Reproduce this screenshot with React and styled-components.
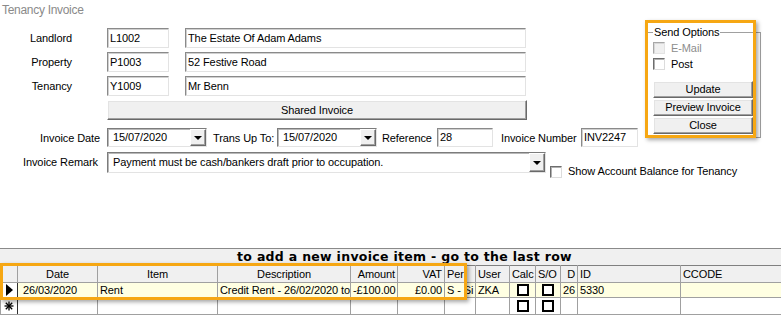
import styled, { createGlobalStyle } from 'styled-components'

const GlobalStyle = createGlobalStyle`
  html, body {
    margin: 0;
    padding: 0;
    background: #ffffff;
  }
  body {
    font-family: "Liberation Sans", Arial, sans-serif;
    font-size: 11px;
    letter-spacing: -0.1px;
    color: #000000;
  }
`

const ORANGE = '#f6a713'

const Page = styled.div`
  position: relative;
  width: 781px;
  height: 316px;
  overflow: hidden;
  background: #ffffff;
`

const TopSection = styled.div`
  display: flex;
  align-items: flex-start;
`

const FormColumn = styled.div`
  width: 647px;
  flex-shrink: 0;
`

const Title = styled.div`
  margin: 3px 0 0 2px;
  height: 14px;
  line-height: 14px;
  font-size: 12px;
  letter-spacing: -0.3px;
  color: #8a8a8a;
`

const FieldRow = styled.div`
  display: flex;
  align-items: ${props => props.align || 'center'};
  height: ${props => props.h || 20}px;
  margin-top: ${props => props.mt ?? 4}px;
`

const Label = styled.div`
  width: ${props => props.w}px;
  margin-left: ${props => props.ml || 0}px;
  text-align: ${props => props.right ? 'right' : 'left'};
  flex-shrink: 0;
  white-space: nowrap;
`

const TextBox = styled.div`
  box-sizing: border-box;
  width: ${props => props.w}px;
  height: ${props => props.h || 20}px;
  margin-left: ${props => props.ml || 0}px;
  padding: 0 2px;
  line-height: ${props => (props.h || 20) - 2}px;
  border: 1px solid;
  border-color: #8a8a8a #e3e3e3 #e3e3e3 #8a8a8a;
  box-shadow: inset 1px 1px 0 #d0d0d0;
  background: #ffffff;
  white-space: nowrap;
  overflow: hidden;
  flex-shrink: 0;
`

const Combo = styled.div`
  box-sizing: border-box;
  display: flex;
  align-items: stretch;
  width: ${props => props.w}px;
  height: ${props => props.h || 19}px;
  margin-left: ${props => props.ml || 0}px;
  border: 1px solid;
  border-color: #7c7c7c #e3e3e3 #e3e3e3 #7c7c7c;
  box-shadow: inset 1px 1px 0 #b8b8b8;
  background: #ffffff;
  flex-shrink: 0;
`

const ComboText = styled.div`
  flex: 1;
  padding-left: 5px;
  line-height: ${props => (props.h || 19) - 2}px;
  white-space: nowrap;
  overflow: hidden;
`

const DropButton = styled.div`
  box-sizing: border-box;
  width: 16px;
  display: flex;
  align-items: center;
  justify-content: center;
  background: #f0f0f0;
  border: 1px solid;
  border-color: #ffffff #696969 #696969 #ffffff;
  box-shadow: inset -1px -1px 0 #a0a0a0;

  &::after {
    content: '';
    border-left: 4px solid transparent;
    border-right: 4px solid transparent;
    border-top: 4px solid #000000;
    margin-top: 1px;
  }
`

const Button = styled.div`
  box-sizing: border-box;
  width: ${props => props.w}px;
  height: ${props => props.h || 17}px;
  margin-left: ${props => props.ml || 0}px;
  margin-top: ${props => props.mt || 0}px;
  line-height: ${props => (props.h || 17) - 2}px;
  text-align: center;
  background: #f0f0f0;
  border: 1px solid;
  border-color: #ffffff #696969 #696969 #ffffff;
  box-shadow: inset -1px -1px 0 #a0a0a0, inset 1px 1px 0 #e3e3e3;
  white-space: nowrap;
`

const CheckBox = styled.div`
  box-sizing: border-box;
  width: 12px;
  height: 12px;
  margin-left: ${props => props.ml || 0}px;
  margin-top: ${props => props.mt || 0}px;
  border: 1px solid;
  border-color: ${props => props.disabled ? '#a8a8a8 #e3e3e3 #e3e3e3 #a8a8a8' : '#6d6d6d #dcdcdc #dcdcdc #6d6d6d'};
  box-shadow: inset 1px 1px 0 ${props => props.disabled ? '#d8d8d8' : '#b0b0b0'};
  background: ${props => props.disabled ? '#f0f0f0' : '#ffffff'};
  flex-shrink: 0;
`

const GroupBox = styled.div`
  box-sizing: border-box;
  width: 114px;
  margin-top: 32px;
  padding: 0 6px 3px 5px;
  border: 1px solid #a0a0a0;
  box-shadow: inset 1px 1px 0 #ffffff;
`

const Legend = styled.div`
  width: fit-content;
  margin-top: -7px;
  padding: 0 1px;
  line-height: 13px;
  background: #ffffff;
`

const CheckRow = styled.div`
  display: flex;
  align-items: center;
  gap: 6px;
  height: 12px;
  margin-top: ${props => props.mt}px;
  color: ${props => props.disabled ? '#8d8d8d' : '#000000'};
`

const RemarkText = styled.div`
  margin-left: 6px;
  margin-top: 13px;
  white-space: nowrap;
`

const GridWrap = styled.div`
  margin-top: 71px;
  border-top: 1px solid #8a8a8a;
`

const GridBar = styled.div`
  height: 16px;
  padding-left: 28px;
  line-height: 16px;
  text-align: center;
  background: #f0f0f0;
  font-family: "DejaVu Sans", Verdana, sans-serif;
  font-weight: bold;
  font-size: 12.5px;
  letter-spacing: 0.3px;
  white-space: nowrap;
`

const Table = styled.table`
  border-collapse: collapse;
  table-layout: fixed;
  width: 782px;
`

const HeadCell = styled.th`
  height: 16px;
  padding: 0 2px;
  border: 1px solid #a0a0a0;
  border-top-color: #808080;
  background: #f0f0f0;
  font-weight: normal;
  text-align: ${props => props.align || 'left'};
  white-space: nowrap;
  overflow: hidden;
`

const Cell = styled.td`
  height: ${props => props.h || 14}px;
  padding: 0 2px;
  border: 1px solid #a0a0a0;
  background: ${props => props.bg || '#ffffff'};
  text-align: ${props => props.align || 'left'};
  white-space: nowrap;
  overflow: hidden;
  line-height: 13px;
`

const SelectorCell = styled.td`
  height: ${props => props.h || 14}px;
  padding: 0;
  border: 1px solid #a0a0a0;
  border-right: 1px solid #303030;
  text-align: center;
  vertical-align: middle;
`

const Pointer = styled.div`
  width: 0;
  height: 0;
  margin-left: 5px;
  border-top: 6px solid transparent;
  border-bottom: 6px solid transparent;
  border-left: 7px solid #000000;
`

const GridCheck = styled.div`
  box-sizing: border-box;
  width: 12px;
  height: 12px;
  margin: 0 auto;
  border: 2px solid #000000;
  background: #ffffff;
`

const Highlight = styled.div`
  position: absolute;
  left: ${props => props.x}px;
  top: ${props => props.y}px;
  width: ${props => props.w}px;
  height: ${props => props.h}px;
  box-sizing: border-box;
  border: 3px solid ${ORANGE};
  box-shadow: 2px 2px 4px rgba(0, 0, 0, 0.35);
  pointer-events: none;
`

const columns = [
  { key: 'sel', w: 17 },
  { key: 'date', w: 80, label: 'Date', align: 'center' },
  { key: 'item', w: 120, label: 'Item', align: 'center' },
  { key: 'desc', w: 133, label: 'Description', align: 'center' },
  { key: 'amount', w: 47, label: 'Amount', align: 'right' },
  { key: 'vat', w: 47, label: 'VAT', align: 'right' },
  { key: 'per', w: 31, label: 'Per' },
  { key: 'user', w: 34, label: 'User' },
  { key: 'calc', w: 26, label: 'Calc' },
  { key: 'so', w: 25, label: 'S/O' },
  { key: 'd', w: 17, label: 'D', align: 'right' },
  { key: 'id', w: 103, label: 'ID' },
  { key: 'ccode', w: 102, label: 'CCODE' },
]

const Asterisk = () => (
  <svg width="10" height="10" viewBox="0 0 10 10" style={{ display: 'block', margin: '0 auto' }}>
    <g stroke="#000" strokeWidth="1.3">
      <line x1="5" y1="0.5" x2="5" y2="9.5" />
      <line x1="0.5" y1="5" x2="9.5" y2="5" />
      <line x1="1.8" y1="1.8" x2="8.2" y2="8.2" />
      <line x1="8.2" y1="1.8" x2="1.8" y2="8.2" />
    </g>
  </svg>
)

function InvoiceGrid() {
  const rowBg = '#ffffe2'
  return (
    <GridWrap>
      <GridBar>to add a new invoice item - go to the last row</GridBar>
      <Table>
        <colgroup>
          {columns.map(c => <col key={c.key} style={{ width: c.w }} />)}
        </colgroup>
        <thead>
          <tr>
            {columns.map(c => (
              <HeadCell key={c.key} align={c.align}>{c.label || ''}</HeadCell>
            ))}
          </tr>
        </thead>
        <tbody>
          <tr>
            <SelectorCell><Pointer /></SelectorCell>
            <Cell bg={rowBg} style={{ paddingLeft: 5 }}>26/03/2020</Cell>
            <Cell bg={rowBg}>Rent</Cell>
            <Cell bg={rowBg}>Credit Rent - 26/02/2020 to</Cell>
            <Cell bg={rowBg} align="right">-£100.00</Cell>
            <Cell bg={rowBg} align="right">£0.00</Cell>
            <Cell bg={rowBg}>S - Si</Cell>
            <Cell bg={rowBg}>ZKA</Cell>
            <Cell bg={rowBg}><GridCheck /></Cell>
            <Cell bg={rowBg}><GridCheck /></Cell>
            <Cell bg={rowBg} align="right">26</Cell>
            <Cell bg={rowBg}>5330</Cell>
            <Cell bg={rowBg}></Cell>
          </tr>
          <tr>
            <SelectorCell h={16}><Asterisk /></SelectorCell>
            <Cell h={16} />
            <Cell h={16} />
            <Cell h={16} />
            <Cell h={16} />
            <Cell h={16} />
            <Cell h={16} />
            <Cell h={16} />
            <Cell h={16}><GridCheck /></Cell>
            <Cell h={16}><GridCheck /></Cell>
            <Cell h={16} />
            <Cell h={16} />
            <Cell h={16} />
          </tr>
        </tbody>
      </Table>
    </GridWrap>
  )
}

function SendOptions() {
  return (
    <GroupBox>
      <Legend>Send Options</Legend>
      <CheckRow mt={3} disabled>
        <CheckBox disabled />
        <span>E-Mail</span>
      </CheckRow>
      <CheckRow mt={4}>
        <CheckBox />
        <span>Post</span>
      </CheckRow>
      <Button w={100} mt={11}>Update</Button>
      <Button w={100} mt={1}>Preview Invoice</Button>
      <Button w={100} mt={1}>Close</Button>
    </GroupBox>
  )
}

export default function App() {
  return (
    <Page>
      <GlobalStyle />
      <TopSection>
        <FormColumn>
          <Title>Tenancy Invoice</Title>
          <FieldRow mt={11}>
            <Label w={72} right>Landlord</Label>
            <TextBox w={62} ml={35}>L1002</TextBox>
            <TextBox w={341} ml={16}>The Estate Of Adam Adams</TextBox>
          </FieldRow>
          <FieldRow>
            <Label w={72} right>Property</Label>
            <TextBox w={62} ml={35}>P1003</TextBox>
            <TextBox w={341} ml={16}>52 Festive Road</TextBox>
          </FieldRow>
          <FieldRow>
            <Label w={72} right>Tenancy</Label>
            <TextBox w={62} ml={35}>Y1009</TextBox>
            <TextBox w={341} ml={16}>Mr Benn</TextBox>
          </FieldRow>
          <FieldRow>
            <Button w={420} h={20} ml={107}>Shared Invoice</Button>
          </FieldRow>
          <FieldRow mt={8} h={19}>
            <Label w={100} right>Invoice Date</Label>
            <Combo w={100} ml={7}>
              <ComboText>15/07/2020</ComboText>
              <DropButton />
            </Combo>
            <Label w={64} ml={6}>Trans Up To:</Label>
            <Combo w={100}>
              <ComboText>15/07/2020</ComboText>
              <DropButton />
            </Combo>
            <Label w={55} ml={5}>Reference</Label>
            <TextBox w={56} h={19}>28</TextBox>
            <Label w={80} ml={8}>Invoice Number</Label>
            <TextBox w={57} h={19}>INV2247</TextBox>
          </FieldRow>
        </FormColumn>
        <SendOptions />
      </TopSection>
      <FieldRow mt={5} h={25} align="flex-start">
        <Label w={98} right style={{ lineHeight: '21px' }}>Invoice Remark</Label>
        <Combo w={439} h={21} ml={9}>
          <ComboText h={21}>Payment must be cash/bankers draft prior to occupation.</ComboText>
          <DropButton />
        </Combo>
        <CheckBox ml={4} mt={14} />
        <RemarkText>Show Account Balance for Tenancy</RemarkText>
      </FieldRow>
      <InvoiceGrid />
      <Highlight x={645} y={20} w={111} h={118} />
      <Highlight x={0} y={263} w={467} h={37} />
    </Page>
  )
}
